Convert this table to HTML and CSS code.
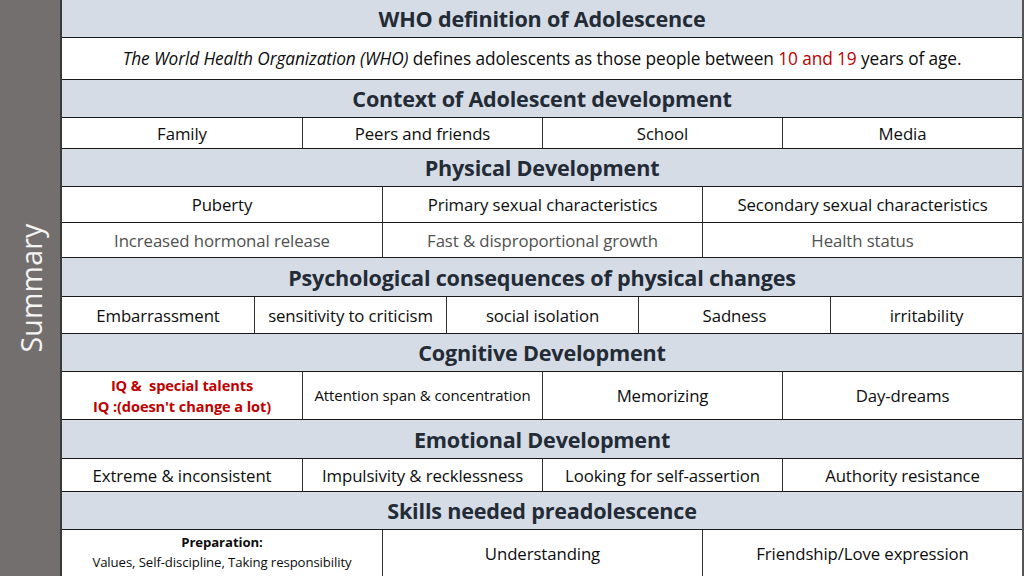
FILE: index.html
```html
<!DOCTYPE html>
<html>
<head>
<meta charset="utf-8">
<link rel="stylesheet" href="styles.css">
</head>
<body>
<div class="page">
  <aside class="side"><span class="side-label">Summary</span></aside>
  <main class="table">
    <div class="row head h38">WHO definition of Adolescence</div>
    <div class="row cols1 h42">
      <div class="cell intro"><span><em>The World Health Organization (WHO)</em> defines adolescents as those people between <span class="red">10 and 19</span> years of age.</span></div>
    </div>
    <div class="row head h38">Context of Adolescent development</div>
    <div class="row cols4 h31">
      <div class="cell">Family</div><div class="cell">Peers and friends</div><div class="cell">School</div><div class="cell">Media</div>
    </div>
    <div class="row head h38">Physical Development</div>
    <div class="row cols3 h36">
      <div class="cell">Puberty</div><div class="cell">Primary sexual characteristics</div><div class="cell">Secondary sexual characteristics</div>
    </div>
    <div class="row cols3 h35 grey">
      <div class="cell">Increased hormonal release</div><div class="cell">Fast &amp; disproportional growth</div><div class="cell">Health status</div>
    </div>
    <div class="row head h39">Psychological consequences of physical changes</div>
    <div class="row cols5 h37">
      <div class="cell">Embarrassment</div><div class="cell">sensitivity to criticism</div><div class="cell">social isolation</div><div class="cell">Sadness</div><div class="cell">irritability</div>
    </div>
    <div class="row head h38">Cognitive Development</div>
    <div class="row cols4 h48">
      <div class="cell iq"><span>IQ &amp;&nbsp; special talents<br>IQ :(doesn't change a lot)</span></div>
      <div class="cell small">Attention span &amp; concentration</div>
      <div class="cell">Memorizing</div>
      <div class="cell">Day-dreams</div>
    </div>
    <div class="row head h39">Emotional Development</div>
    <div class="row cols4 h33">
      <div class="cell">Extreme &amp; inconsistent</div><div class="cell">Impulsivity &amp; recklessness</div><div class="cell">Looking for self-assertion</div><div class="cell">Authority resistance</div>
    </div>
    <div class="row head h38">Skills needed preadolescence</div>
    <div class="row cols3 h46 last">
      <div class="cell prep"><span><b>Preparation:</b><br>Values, Self-discipline, Taking responsibility</span></div>
      <div class="cell">Understanding</div>
      <div class="cell">Friendship/Love expression</div>
    </div>
  </main>
</div>
</body>
</html>
```
FILE: styles.css
```css
* { box-sizing: border-box; }
html, body { margin: 0; padding: 0; }
body {
  width: 1024px;
  height: 576px;
  overflow: hidden;
  background: #ffffff;
  font-family: "Open Sans", "Liberation Sans", sans-serif;
  color: #0d0d0d;
}
.page {
  display: flex;
  width: 1024px;
  height: 576px;
}
.side {
  width: 60px;
  flex: 0 0 60px;
  background: #746f6f;
  display: flex;
  align-items: center;
  justify-content: center;
}
.side-label {
  transform: rotate(-90deg);
  color: #f4f4f4;
  font-size: 28.5px;
  white-space: nowrap;
  letter-spacing: 0.2px;
  margin-left: 2px;
}
.table {
  flex: 1;
  display: flex;
  flex-direction: column;
  border-left: 2px solid #3a3a3a;
  border-right: 2px solid #555555;
  overflow: hidden;
}
.row {
  flex: 0 0 auto;
  border-bottom: 1.5px solid #1a1a1a;
  display: grid;
}
.row.last { border-bottom: none; flex: 1 1 auto; }
.head {
  background: #d6dce5;
  color: #232b36;
  font-weight: 700;
  font-size: 21.6px;
  display: flex;
  align-items: center;
  justify-content: center;
  letter-spacing: -0.2px;
}
.h31 { height: 31px; }
.h33 { height: 33px; }
.h35 { height: 35px; }
.h36 { height: 36px; }
.h37 { height: 37px; }
.h38 { height: 38px; }
.h39 { height: 39px; }
.h42 { height: 42px; }
.h46 { height: 46px; }
.h48 { height: 48px; }
.cols1 { grid-template-columns: 1fr; }
.cols3 { grid-template-columns: repeat(3, 1fr); }
.cols4 { grid-template-columns: repeat(4, 1fr); }
.cols5 { grid-template-columns: repeat(5, 1fr); }
.cell {
  display: flex;
  align-items: center;
  justify-content: center;
  text-align: center;
  font-size: 16.8px;
  border-left: 1px solid #333333;
  line-height: 1.25;
  letter-spacing: -0.1px;
}
.cell:first-child { border-left: none; }
.intro { font-size: 17.3px; }
.grey .cell { color: #505050; }
.red { color: #c00000; }
.iq {
  color: #c00000;
  font-weight: 700;
  font-size: 14.6px;
  line-height: 1.4;
}
.small { font-size: 15px; }
.prep {
  font-size: 13.2px;
  line-height: 1.5;
}
```
